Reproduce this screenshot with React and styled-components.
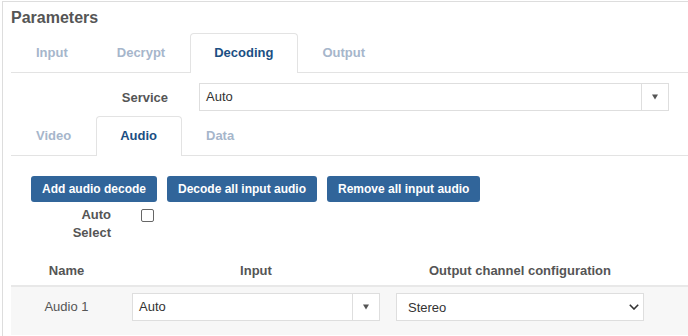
import React, { useState } from "react";
import styled, { createGlobalStyle } from "styled-components";

const GlobalStyle = createGlobalStyle`
  html, body {
    margin: 0;
    padding: 0;
    background: #fff;
    overflow: hidden;
  }
  body {
    font-family: "Liberation Sans", Arial, sans-serif;
    color: #555;
  }
`;

function ComboSelect({ value, width }) {
  return (
    <Combo $width={width}>
      <ComboValue>{value}</ComboValue>
      <ComboButton>
        <svg width="6" height="6" viewBox="0 0 6 6">
          <path d="M0 0.5 H6 L3 5.5 Z" fill="#555" />
        </svg>
      </ComboButton>
    </Combo>
  );
}

function App() {
  const [tab, setTab] = useState("Decoding");
  const [subTab, setSubTab] = useState("Audio");
  const [autoSelect, setAutoSelect] = useState(false);

  return (
    <>
      <GlobalStyle />
      <Panel>
        <Title>Parameters</Title>
        <TabBar>
          {["Input", "Decrypt", "Decoding", "Output"].map((t) => (
            <Tab key={t} $active={tab === t} onClick={() => setTab(t)}>
              {t}
            </Tab>
          ))}
        </TabBar>

        <FormRow>
          <FormLabel>Service</FormLabel>
          <ComboSelect value="Auto" width="470px" />
        </FormRow>

        <TabBar $tight>
          {["Video", "Audio", "Data"].map((t) => (
            <Tab key={t} $active={subTab === t} onClick={() => setSubTab(t)}>
              {t}
            </Tab>
          ))}
        </TabBar>

        <Actions>
          <Button>Add audio decode</Button>
          <Button>Decode all input audio</Button>
          <Button>Remove all input audio</Button>
        </Actions>

        <CheckRow>
          <CheckLabel>Auto Select</CheckLabel>
          <Checkbox
            type="checkbox"
            checked={autoSelect}
            onChange={(e) => setAutoSelect(e.target.checked)}
          />
        </CheckRow>

        <Table>
          <HeadRow>
            <HeadCell>Name</HeadCell>
            <HeadCell>Input</HeadCell>
            <HeadCell>Output channel configuration</HeadCell>
            <HeadCell />
          </HeadRow>
          <BodyRow>
            <NameCell>Audio 1</NameCell>
            <Cell $pad="10px">
              <ComboSelect value="Auto" />
            </Cell>
            <Cell $pad="6px">
              <NativeSelect>
                <span>Stereo</span>
                <svg width="10" height="6" viewBox="0 0 10 6">
                  <path d="M0.8 0.8 L5 5 L9.2 0.8" fill="none" stroke="#333" strokeWidth="1.6" />
                </svg>
              </NativeSelect>
            </Cell>
            <Cell />
          </BodyRow>
        </Table>
      </Panel>
    </>
  );
}

export default App;

const Panel = styled.div`
  margin: 1px 0 0 2px;
  border: 1px solid #ddd;
  border-right: none;
  border-bottom: none;
  padding: 6px 0 40px 8px;
`;

const Title = styled.div`
  font-size: 16px;
  font-weight: bold;
  color: #555;
  line-height: 20px;
  margin-bottom: 5px;
`;

const TabBar = styled.div`
  display: flex;
  border-bottom: 1px solid #e3e3e3;
  padding-left: 1px;
  margin-top: ${(p) => (p.$tight ? "5px" : "0")};
`;

const Tab = styled.div`
  padding: 0 24px 1px 23px;
  height: 38px;
  line-height: 38px;
  font-size: 13px;
  font-weight: bold;
  color: ${(p) => (p.$active ? "#1b4f83" : "#a6b6cb")};
  border: 1px solid ${(p) => (p.$active ? "#e3e3e3" : "transparent")};
  border-bottom: none;
  border-radius: 4px 4px 0 0;
  background: ${(p) => (p.$active ? "#fff" : "transparent")};
  margin-bottom: -1px;
  cursor: pointer;
`;

const FormRow = styled.div`
  display: flex;
  align-items: center;
  margin-top: 10px;
`;

const FormLabel = styled.div`
  width: 157px;
  text-align: right;
  margin-right: 31px;
  font-size: 13px;
  font-weight: bold;
  color: #555;
`;

const Combo = styled.div`
  display: flex;
  width: ${(p) => p.$width || "100%"};
  height: 28px;
  box-sizing: border-box;
  border: 1px solid #dedede;
  background: #fff;
`;

const ComboValue = styled.div`
  flex: 1;
  padding-left: 6px;
  font-size: 13px;
  line-height: 26px;
  color: #333;
`;

const ComboButton = styled.div`
  width: 26px;
  border-left: 1px solid #dedede;
  display: flex;
  align-items: center;
  justify-content: center;
`;

const Actions = styled.div`
  display: flex;
  gap: 10px;
  padding-left: 20px;
  margin-top: 20px;
`;

const Button = styled.button`
  height: 26px;
  padding: 0 11px;
  border: none;
  border-radius: 3px;
  background: #31659a;
  color: #fff;
  font-family: "Liberation Sans", Arial, sans-serif;
  font-size: 12px;
  font-weight: bold;
  cursor: pointer;
`;

const CheckRow = styled.div`
  display: flex;
  align-items: flex-start;
  margin-top: 4px;
  padding-left: 40px;
`;

const CheckLabel = styled.div`
  width: 60px;
  text-align: right;
  font-size: 13px;
  font-weight: bold;
  line-height: 18px;
  color: #555;
`;

const Checkbox = styled.input`
  appearance: none;
  width: 13px;
  height: 13px;
  margin: 3px 0 0 30px;
  border: 1px solid #666;
  border-radius: 2px;
  background: #fff;
  &:checked {
    background: #31659a;
    border-color: #31659a;
  }
`;

const Table = styled.div`
  margin-top: 15px;
`;

const HeadRow = styled.div`
  display: grid;
  grid-template-columns: 111px 268px 260px 1fr;
  border-bottom: 2px solid #e8e8e8;
`;

const HeadCell = styled.div`
  height: 28px;
  line-height: 28px;
  text-align: center;
  font-size: 13px;
  font-weight: bold;
  color: #555;
`;

const BodyRow = styled.div`
  display: grid;
  grid-template-columns: 111px 268px 260px 1fr;
  background: #f7f7f7;
  padding: 6px 0 14px;
`;

const NameCell = styled.div`
  line-height: 28px;
  text-align: center;
  font-size: 13px;
  color: #555;
`;

const Cell = styled.div`
  padding: 0 ${(p) => p.$pad || "0"};
`;

const NativeSelect = styled.div`
  display: flex;
  align-items: center;
  justify-content: space-between;
  height: 28px;
  box-sizing: border-box;
  border: 1px solid #dedede;
  background: #fff;
  padding: 0 4px 0 11px;
  font-size: 13px;
  color: #333;
`;
